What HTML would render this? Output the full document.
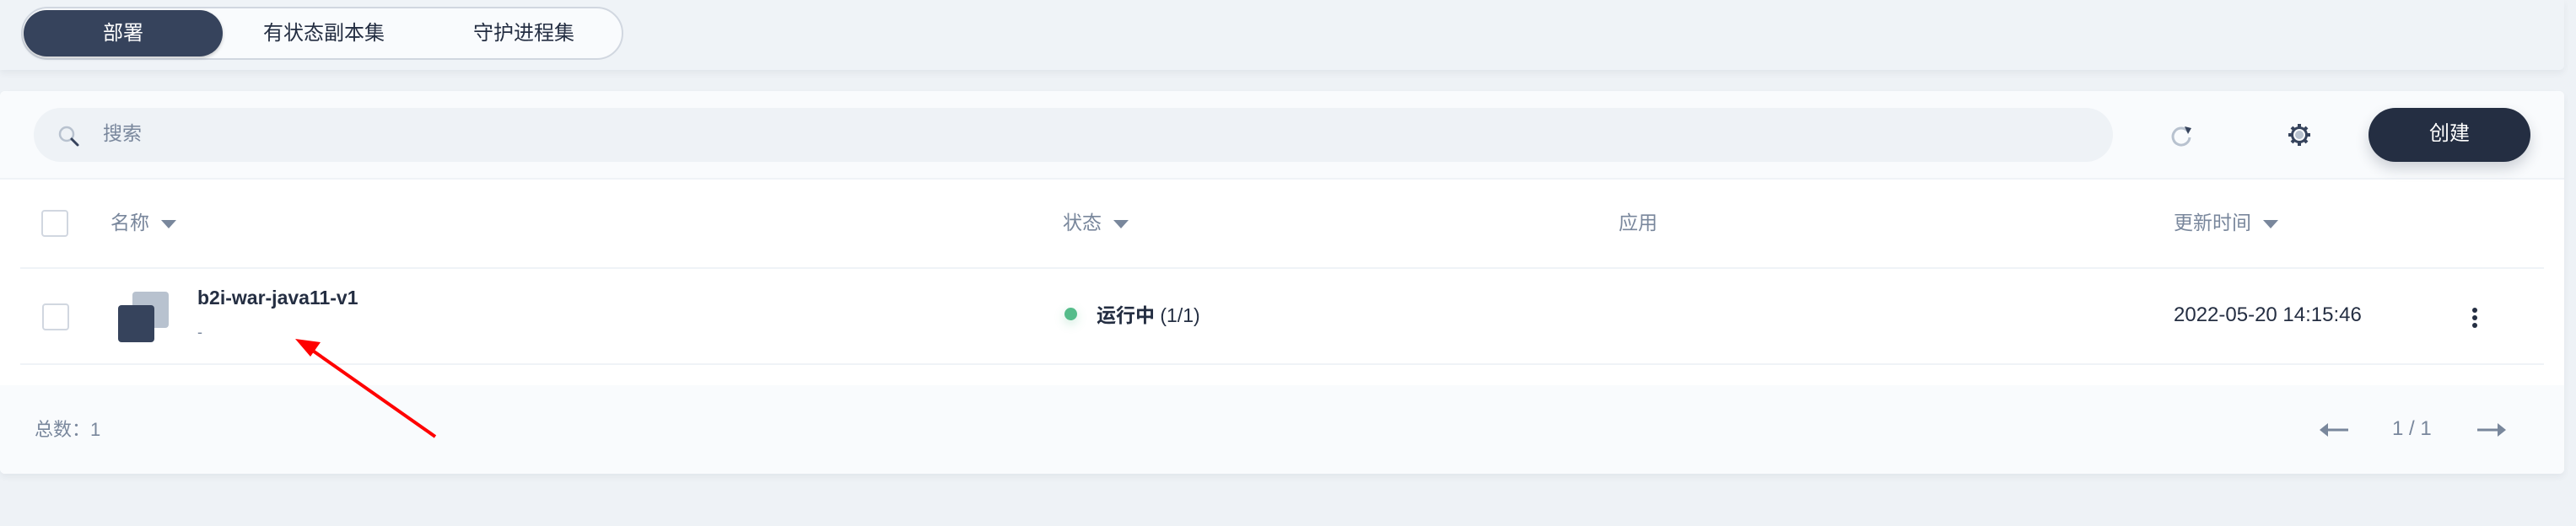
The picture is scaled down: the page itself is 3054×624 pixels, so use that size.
<!DOCTYPE html>
<html><head><meta charset="utf-8"><style>
*{margin:0;padding:0;box-sizing:border-box}
body{width:3054px;height:624px;background:#eef2f6;font-family:"Liberation Sans","Noto Sans CJK SC",sans-serif;position:relative;overflow:hidden;color:#242e42}
.abs{position:absolute}
.top{left:0;top:0;width:3040px;height:83px;background:#eff3f7;box-shadow:0 4px 8px rgba(36,46,66,.06);border-radius:0 0 6px 0}
.tabs{left:25px;top:8px;width:714px;height:63px;border:2px solid #d1d7e0;border-radius:32px;background:#f9fbfd}
.tab{position:absolute;top:0;height:59px;line-height:59px;font-size:24px;color:#242e42;white-space:nowrap}
.card{left:0;top:108px;width:3040px;height:454px;background:#fff;border-radius:6px;box-shadow:0 4px 8px rgba(36,46,66,.06);overflow:hidden}
.hd{color:#79879c;font-size:23px}
.tri{display:inline-block;width:0;height:0;border-left:9px solid transparent;border-right:9px solid transparent;border-top:10px solid #79879c;vertical-align:middle;margin-left:14px}
.cb{width:32px;height:32px;border:2px solid #d1d7e0;border-radius:4px;background:#fff}
</style></head><body>
<div class="abs top"></div>
<div class="abs tabs">
 <div class="abs" style="left:1px;top:2px;width:236px;height:55px;background:#36435c;border-radius:28px;box-shadow:0 2px 4px rgba(0,0,0,.2)"></div>
 <div class="tab" style="left:1px;width:236px;color:#fff;text-align:center">部署</div>
 <div class="tab" style="left:285px">有状态副本集</div>
 <div class="tab" style="left:534px">守护进程集</div>
</div>
<div class="abs card">
 <div class="abs" style="left:0;top:0;width:3040px;height:105px;background:#f9fbfd;border-bottom:2px solid #eff3f7"></div>
 <div class="abs" style="left:40px;top:20px;width:2465px;height:64px;background:#eef2f6;border-radius:32px"></div>
 <svg class="abs" style="left:68px;top:40px" width="28" height="28" viewBox="0 0 28 28"><circle cx="11" cy="11" r="8" fill="none" stroke="#b8c2cf" stroke-width="2.5"/><path d="M17 17l7 7" stroke="#36435c" stroke-width="3" stroke-linecap="round"/></svg>
 <div class="abs" style="left:122px;top:31px;font-size:23px;color:#79879c">搜索</div>
 <svg class="abs" style="left:2572px;top:38px" width="30" height="30" viewBox="0 0 30 30"><path d="M22 10A10 10 0 1 0 24 17" fill="none" stroke="#b8c2cf" stroke-width="3"/><path d="M18 4l8 2-4 7z" fill="#36435c"/></svg>
 <svg class="abs" style="left:2711px;top:37px" width="30" height="30" viewBox="0 0 30 30"><g fill="#36435c"><circle cx="15" cy="15" r="10"/><g stroke="#36435c" stroke-width="4"><path d="M15 2v26M2 15h26M6 6l18 18M24 6L6 24"/></g></g><circle cx="15" cy="15" r="7" fill="#f9fbfd"/><circle cx="15" cy="15" r="5" fill="#b8c2cf"/></svg>
 <div class="abs" style="left:2808px;top:20px;width:192px;height:64px;background:#242e42;border-radius:32px;color:#fff;font-size:24px;line-height:62px;text-align:center;box-shadow:0 8px 16px rgba(36,46,66,.2)">创建</div>

 <div class="abs cb" style="left:49px;top:141px"></div>
 <div class="abs hd" style="left:131px;top:137px">名称<span class="tri"></span></div>
 <div class="abs hd" style="left:1260px;top:137px">状态<span class="tri"></span></div>
 <div class="abs hd" style="left:1919px;top:137px">应用</div>
 <div class="abs hd" style="left:2577px;top:137px">更新时间<span class="tri"></span></div>
 <div class="abs" style="left:24px;top:209px;width:2992px;height:2px;background:#eff3f7"></div>

 <div class="abs cb" style="left:50px;top:252px"></div>
 <div class="abs" style="left:157px;top:238px;width:43px;height:43px;background:#b8c2cf;border-radius:4px"></div>
 <div class="abs" style="left:140px;top:254px;width:43px;height:44px;background:#36435c;border-radius:4px"></div>
 <div class="abs" style="left:234px;top:232px;font-size:23px;font-weight:bold;color:#242e42">b2i-war-java11-v1</div>
 <div class="abs" style="left:234px;top:276px;font-size:18px;color:#79879c">-</div>
 <div class="abs" style="left:1262px;top:257px;width:15px;height:15px;border-radius:50%;background:#55bc8a;box-shadow:0 4px 12px rgba(85,188,138,.3)"></div>
 <div class="abs" style="left:1300px;top:247px;font-size:23px;color:#242e42"><b>运行中</b> (1/1)</div>
 <div class="abs" style="left:2577px;top:252px;font-size:24px;color:#242e42">2022-05-20 14:15:46</div>
 <div class="abs" style="left:2931px;top:257px;width:6px;height:6px;border-radius:50%;background:#242e42;box-shadow:0 9px 0 #242e42,0 18px 0 #242e42"></div>
 <div class="abs" style="left:24px;top:323px;width:2992px;height:2px;background:#eff3f7"></div>

 <div class="abs" style="left:0;top:349px;width:3040px;height:105px;background:#f9fbfd"></div>
 <div class="abs" style="left:41px;top:384px;font-size:22px;color:#79879c">总数：1</div>
 <svg class="abs" style="left:2750px;top:392px" width="36" height="20" viewBox="0 0 36 20"><path d="M10 10h24" stroke="#79879c" stroke-width="3"/><path d="M0 10l10-8v16z" fill="#79879c"/></svg>
 <div class="abs" style="left:2836px;top:387px;font-size:24px;color:#79879c">1 / 1</div>
 <svg class="abs" style="left:2937px;top:392px" width="36" height="20" viewBox="0 0 36 20"><path d="M0 10h24" stroke="#79879c" stroke-width="3"/><path d="M34 10l-10-8v16z" fill="#79879c"/></svg>
</div>
<svg class="abs" style="left:0;top:0" width="3054" height="624"><path d="M516 518L368 414" stroke="#ff0000" stroke-width="4"/><path d="M350 402l30 4-12 17z" fill="#ff0000"/></svg>
</body></html>
